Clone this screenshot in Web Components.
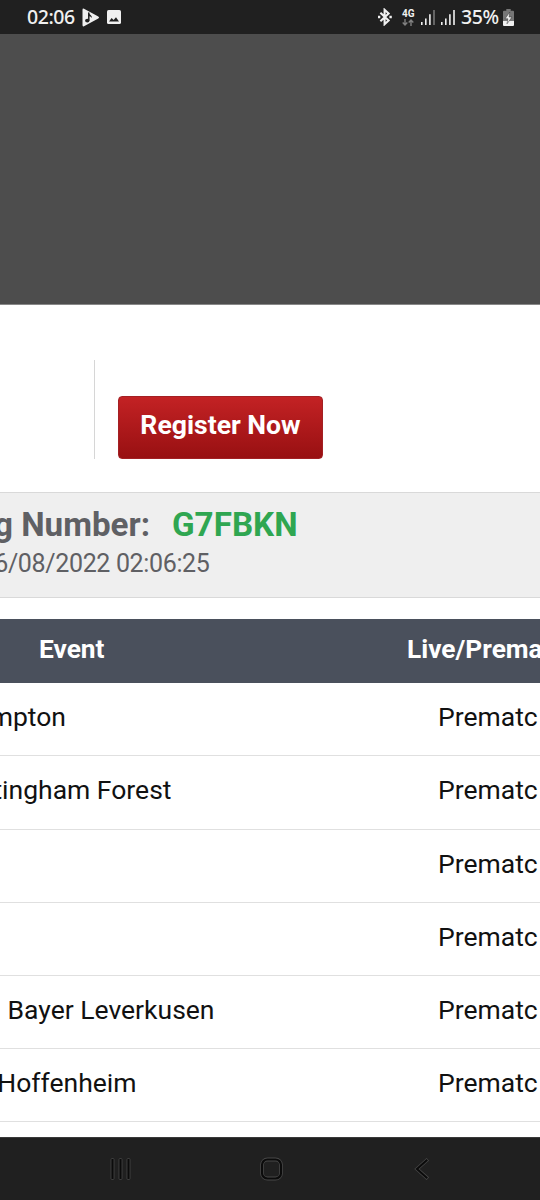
<!DOCTYPE html>
<html lang="en">
<head>
<meta charset="utf-8">
<meta name="viewport" content="width=device-width, initial-scale=1">
<title>Booking number</title>
<style>
    body {
        margin: 0;
        background: #fff;
        font-family: Roboto, "Liberation Sans", sans-serif;
    }
</style>
</head>
<body>
<booking-screen></booking-screen>

<script>
class BaseElement extends HTMLElement {
    constructor() {
        super();
        this.attachShadow({ mode: 'open' });
    }
    render() {
        const template = document.createElement('template');
        template.innerHTML = `${this.getStyles()}${this.getTemplate()}`;
        this.shadowRoot.replaceChildren(template.content.cloneNode(true));
    }
    connectedCallback() {
        this.render();
    }
}

class StatusBar extends BaseElement {
    getTemplate() {
        return `
        <span class="time"><slot name="time"></slot></span>
        <svg class="play" width="18" height="19" viewBox="0 0 18 19">
            <path d="M2 .8 Q.5 0 .5 2 V17 Q.5 19 2 18.2 L16.3 10.6 Q18 9.5 16.3 8.4Z" fill="#f0f0f0"/>
            <path d="M6.8 4.5v8" stroke="#202020" stroke-width="1.5"/>
            <path d="M6.3 4.3q.6 1.8 2.3 2.6 1.5.9 1.2 3-1.2-1.6-3.500-1.800z" fill="#202020"/>
            <ellipse cx="5.3" cy="12.6" rx="2.2" ry="1.9" fill="#202020"/>
        </svg>
        <svg class="photo" width="14" height="14" viewBox="0 0 14 14">
            <rect width="14" height="14" rx="1.6" fill="#f0f0f0"/>
            <path d="M2 11.500l2.600-3.400 2 2 2.400-2.900 3 4.300z" fill="#202020"/>
        </svg>
        <span class="space"></span>
        <svg class="bt" width="16" height="18" viewBox="0 0 16 18" fill="none" stroke="#f0f0f0" stroke-width="2.100">
            <path d="M3.400 4.800l8.200 7.800-4 3.600V1.800l4 3.600-8.200 7.800"/>
            <path d="M1 9h2.300M12.400 9h2.400" stroke-width="2.500"/>
        </svg>
        <span class="net">
            <b><slot name="network"></slot></b>
            <svg width="12" height="7" viewBox="0 0 12 7" fill="none" stroke="#808080" stroke-width="1.400">
                <path d="M3 0v6M.7 3.600L3 6l2.300-2.400M9 7V1M6.700 3.400L9 1l2.300 2.400"/>
            </svg>
        </span>
        <svg class="sig" width="14" height="15" viewBox="0 0 14 15" fill="#f0f0f0">
            <path d="M0 12h1.600v3H0zM4 8.500h1.600V15H4zM8.100 4.300h1.600V15H8.100z"/>
            <path d="M12.200 0h1.600v15h-1.600z" fill="#777"/>
        </svg>
        <svg class="sig two" width="14" height="15" viewBox="0 0 14 15" fill="#f0f0f0">
            <path d="M0 12h1.600v3H0zM4 8.500h1.600V15H4zM8.100 4.300h1.600V15H8.100zM12.200 0h1.600v15h-1.600z"/>
        </svg>
        <span class="level"><slot name="battery"></slot></span>
        <svg class="bat" width="11" height="17" viewBox="0 0 11 17">
            <path d="M3.300 0h4.400v1.800H10q1 0 1 1V12H0V2.800q0-1 1-1h2.300z" fill="#777"/>
            <path d="M0 12h11v4q0 1-1 1H1q-1 0-1-1z" fill="#f0f0f0"/>
            <path d="M6.800 3L2 9.800h2.900L4 14.800l5-6.800H6.100z" fill="#f0f0f0" stroke="#303030" stroke-width=".5"/>
        </svg>
        `;
    }
    getStyles() {
        return `
        <style>
        :host {
            display: flex;
            align-items: center;
            box-sizing: border-box;
            height: 34px;
            padding: 0 26px 0 27px;
            background: #202020;
            color: #f0f0f0;
            font: 500 19.5px/34px "Noto Sans", sans-serif;
            letter-spacing: -.45px;
            white-space: nowrap;
        }
        svg { flex: none; display: block; }
        .time { width: 55px; }
        .photo { margin-left: 7px; }
        .space { flex: 1; }
        .bt { margin-right: 9px; }
        .net { width: 12px; margin-right: 7px; }
        .net b { display: block; font: 700 10px/10px Roboto, sans-serif; letter-spacing: 0; }
        .sig.two { margin: 0 6px 0 6px; }
        .level { width: 42px; }
        </style>
        `;
    }
}
customElements.define('status-bar', StatusBar);

class RegisterPanel extends BaseElement {
    getTemplate() {
        return `
        <div class="divider"></div>
        <button><slot></slot></button>
        `;
    }
    getStyles() {
        return `
        <style>
        :host {
            display: flex;
            align-items: flex-end;
            box-sizing: border-box;
            height: 187px;
            padding: 0 0 33px 94px;
        }
        .divider {
            width: 1px;
            height: 99px;
            margin-right: 23px;
            background: #d6d6d6;
        }
        button {
            width: 205px;
            height: 63px;
            padding: 0 0 6px;
            border: 1px solid #a32024;
            border-radius: 4px;
            background: linear-gradient(#c32224, #981012);
            color: #fff;
            font: 700 26.6px Roboto, sans-serif;
            white-space: nowrap;
        }
        </style>
        `;
    }
}
customElements.define('register-panel', RegisterPanel);

class BookingInfo extends BaseElement {
    getTemplate() {
        return `
        <div class="number">
            <span class="label"><slot name="label"></slot></span>
            <span class="code"><slot name="code"></slot></span>
        </div>
        <div class="date"><slot name="date"></slot></div>
        `;
    }
    getStyles() {
        return `
        <style>
        :host {
            display: block;
            box-sizing: border-box;
            height: 106px;
            padding-top: 12px;
            overflow: hidden;
            border-top: 1px solid #d9d9d9;
            border-bottom: 1px solid #d9d9d9;
            background: #efefef;
            color: #5f6064;
            white-space: nowrap;
        }
        .number {
            display: flex;
            font: 700 33.2px/40px Roboto, sans-serif;
        }
        .label {
            display: flex;
            justify-content: flex-end;
            width: 150px;
        }
        .code { margin-left: 22px; color: #2fa651; }
        .date {
            display: flex;
            justify-content: flex-end;
            width: 209.5px;
            font-size: 25px;
            letter-spacing: -.35px;
            line-height: 38px;
        }
        </style>
        `;
    }
}
customElements.define('booking-info', BookingInfo);

class EventRow extends BaseElement {
    getTemplate() {
        // the event column is scrolled left, so its text is anchored at its end
        return `
        <div class="event" style="width: ${this.getAttribute('end') || 0}px"><span>${this.getAttribute('event') || ''}</span></div>
        <div class="type"><slot></slot></div>
        `;
    }
    getStyles() {
        return `
        <style>
        :host {
            display: flex;
            justify-content: space-between;
            box-sizing: border-box;
            height: 73.1px;
            overflow: hidden;
            border-bottom: 1px solid #e0e0e0;
            color: #111;
            font-size: 26.5px;
            line-height: 67.6px;
            white-space: nowrap;
        }
        :host([head]) {
            height: 64.4px;
            border: 0;
            background: #4a505c;
            color: #fff;
            font-size: 26.3px;
            font-weight: 700;
            line-height: 60px;
        }
        .event { display: flex; justify-content: flex-end; }
        .type { width: 102px; }
        :host([head]) .type { width: 133px; }
        </style>
        `;
    }
}
customElements.define('event-row', EventRow);

class NavBar extends BaseElement {
    getTemplate() {
        return `
        <svg width="24" height="24" viewBox="0 0 24 24">
            <g fill="#0b0b0b" stroke="#484848" stroke-width=".8">
                <rect x="2" y="1.500" width="3" height="21" rx="1"/>
                <rect x="10" y="1.500" width="3" height="21" rx="1"/>
                <rect x="18" y="1.500" width="3" height="21" rx="1"/>
            </g>
        </svg>
        <svg width="24" height="24" viewBox="0 0 24 24" fill="none">
            <rect x="2" y="2.500" width="19" height="19" rx="5.500" stroke="#484848" stroke-width="3.800"/>
            <rect x="2" y="2.500" width="19" height="19" rx="5.500" stroke="#0b0b0b" stroke-width="2.200"/>
        </svg>
        <svg width="24" height="24" viewBox="0 0 24 24" fill="none" stroke-linecap="square">
            <path d="M16.500 3.500L7 12l9.500 8.500" stroke="#484848" stroke-width="3.600"/>
            <path d="M16.500 3.500L7 12l9.500 8.500" stroke="#0b0b0b" stroke-width="2.100"/>
        </svg>
        `;
    }
    getStyles() {
        return `
        <style>
        :host {
            display: flex;
            justify-content: space-between;
            box-sizing: border-box;
            height: 63px;
            padding: 19px 106px 0 109px;
            border-top: 1px solid #3a3a3a;
            background: #202020;
        }
        </style>
        `;
    }
}
customElements.define('nav-bar', NavBar);

class BookingScreen extends BaseElement {
    getTemplate() {
        return `
        <status-bar>
            <span slot="time">02:06</span>
            <span slot="network">4G</span>
            <span slot="battery">35%</span>
        </status-bar>
        <div class="shade"></div>
        <register-panel>Register Now</register-panel>
        <booking-info>
            <span slot="label">g Number:</span>
            <span slot="code">G7FBKN</span>
            <span slot="date">6/08/2022 02:06:25</span>
        </booking-info>
        <div class="table">
            <event-row head event="Event" end="104.5">Live/Prema</event-row>
            <event-row event="mpton" end="66">Prematc</event-row>
            <event-row event="tingham Forest" end="171.5">Prematc</event-row>
            <event-row>Prematc</event-row>
            <event-row>Prematc</event-row>
            <event-row event="Bayer Leverkusen" end="214.5">Prematc</event-row>
            <event-row event="Hoffenheim" end="136.5">Prematc</event-row>
        </div>
        <nav-bar></nav-bar>
        `;
    }
    getStyles() {
        return `
        <style>
        :host {
            display: flex;
            flex-direction: column;
            height: 1200px;
            overflow: hidden;
        }
        .shade {
            box-sizing: border-box;
            height: 271px;
            border-bottom: 1px solid #888;
            background: #4d4d4d;
        }
        .table { flex: 1; padding-top: 21px; }
        </style>
        `;
    }
}
customElements.define('booking-screen', BookingScreen);
</script>
</body>
</html>
